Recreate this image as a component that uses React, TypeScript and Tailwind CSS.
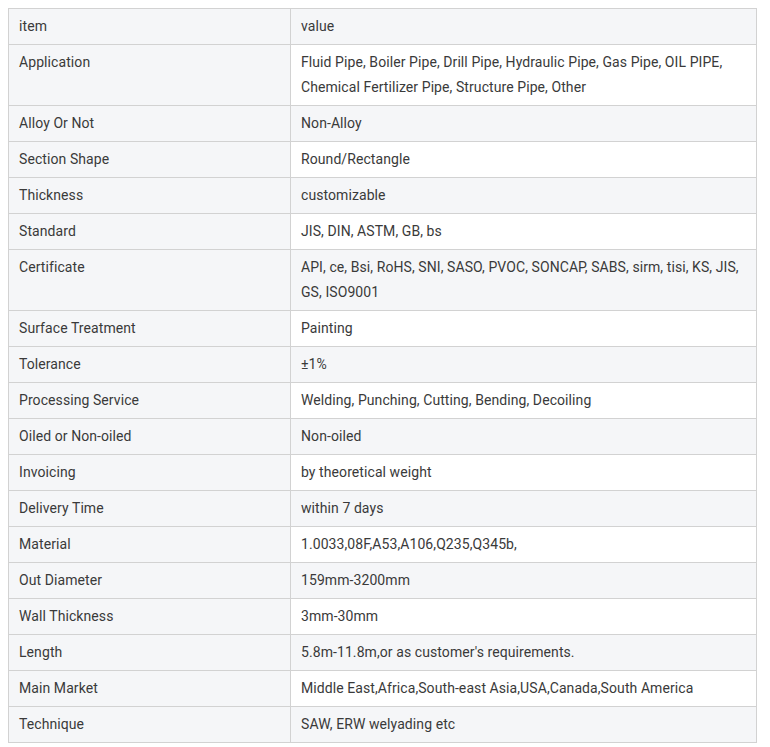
import React from "react";

const rows: [string, string][] = [
  ["item", "value"],
  ["Application", "Fluid Pipe, Boiler Pipe, Drill Pipe, Hydraulic Pipe, Gas Pipe, OIL PIPE, Chemical Fertilizer Pipe, Structure Pipe, Other"],
  ["Alloy Or Not", "Non-Alloy"],
  ["Section Shape", "Round/Rectangle"],
  ["Thickness", "customizable"],
  ["Standard", "JIS, DIN, ASTM, GB, bs"],
  ["Certificate", "API, ce, Bsi, RoHS, SNI, SASO, PVOC, SONCAP, SABS, sirm, tisi, KS, JIS, GS, ISO9001"],
  ["Surface Treatment", "Painting"],
  ["Tolerance", "±1%"],
  ["Processing Service", "Welding, Punching, Cutting, Bending, Decoiling"],
  ["Oiled or Non-oiled", "Non-oiled"],
  ["Invoicing", "by theoretical weight"],
  ["Delivery Time", "within 7 days"],
  ["Material", "1.0033,08F,A53,A106,Q235,Q345b,"],
  ["Out Diameter", "159mm-3200mm"],
  ["Wall Thickness", "3mm-30mm"],
  ["Length", "5.8m-11.8m,or as customer's requirements."],
  ["Main Market", "Middle East,Africa,South-east Asia,USA,Canada,South America"],
  ["Technique", "SAW, ERW welyading etc"],
];

export default function App() {
  return (
    <div className="bg-white p-2 min-h-screen" style={{ fontFamily: "Roboto, 'Noto Sans', sans-serif" }}>
      <table className="w-[749px] border-collapse table-fixed text-[14px] leading-[25px] tracking-[0.08px] text-[#3a3a3a]">
        <colgroup>
          <col className="w-[282px]" />
          <col />
        </colgroup>
        <tbody>
          {rows.map(([k, v], i) => (
            <tr key={k} className={i % 2 === 0 ? "bg-[#f5f6f8]" : "bg-white"}>
              <td className="border border-[#d2d2d2] px-[10px] py-[5px] align-top bg-[#f5f6f8]">{k}</td>
              <td className="border border-[#d2d2d2] px-[10px] py-[5px] align-top">{v}</td>
            </tr>
          ))}
        </tbody>
      </table>
    </div>
  );
}
